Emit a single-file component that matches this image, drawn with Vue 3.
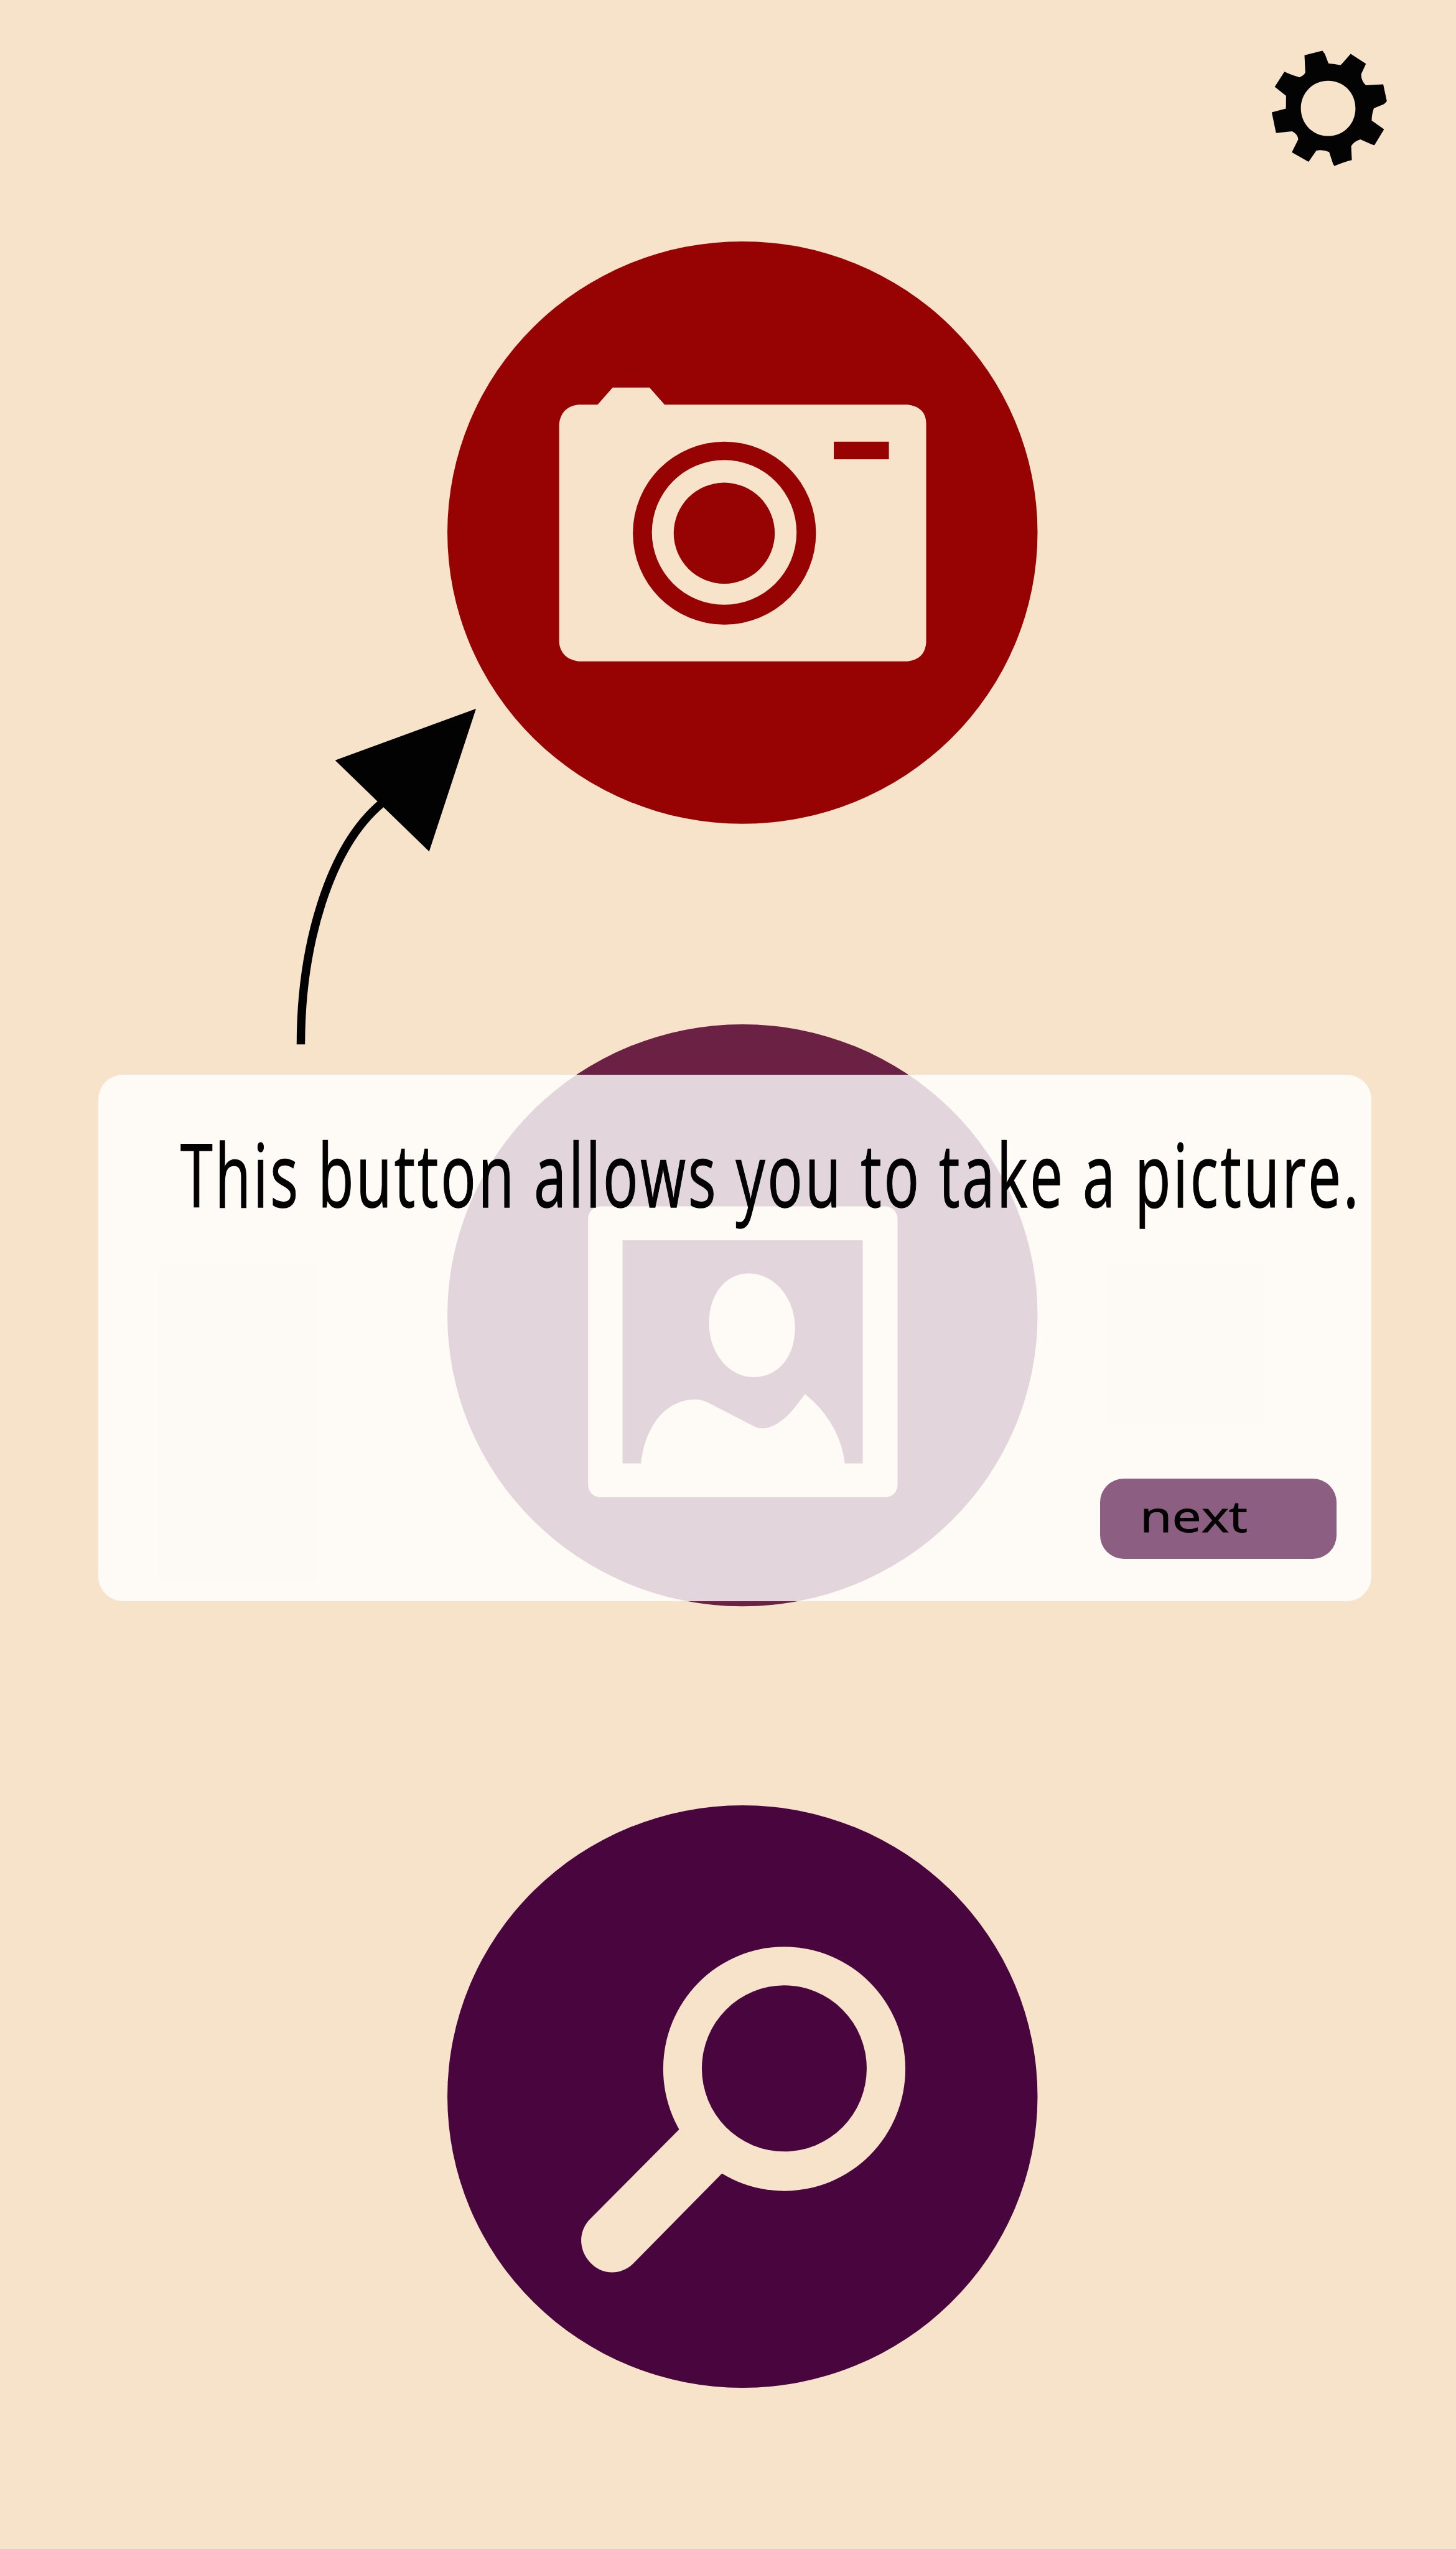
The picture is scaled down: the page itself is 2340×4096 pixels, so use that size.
<script setup>
const message = 'This button allows you to take a picture.'
</script>

<template>
  <main class="screen">
    <header class="top-bar">
      <button class="settings" aria-label="Settings">
        <svg viewBox="0 0 960 900">
          <path
            fill="#040303"
            fill-rule="evenodd"
            d="M316 128L425 100L440 120L462 178Q500 180 535 188L547 176L597 119L690 180L661 242Q660 285 690 310L795 305L817 408L800 425L738 450Q724 490 725 525L800 578L741 676L720 668L656 640Q620 650 600 680L604 765Q560 775 498 801L490 790L466 716Q425 700 388 708L341 776L239 718L278 640Q275 605 240 590L143 601L117 475L203 452L204 375L135 320L194 228Q240 250 285 262Q315 250 321 232ZM460 283C366 283 294 358 294 451S366 619 460 619S626 546 626 451S554 283 460 283Z"
          />
        </svg>
      </button>
    </header>

    <nav class="actions">
      <button class="action" aria-label="Camera">
        <svg viewBox="0 0 1568 1568" preserveAspectRatio="none">
          <ellipse cx="777.5" cy="783" rx="744.5" ry="746.5" fill="#970303" />
          <path
            fill="#f6e3ca"
            d="M363 455H412L450 411H543L581 455H1194Q1241 461 1241 504V1066Q1237 1108 1194 1113H363Q320 1106 315 1066V504Q320 461 363 455Z"
          />
          <ellipse cx="732" cy="784.5" rx="231" ry="234.5" fill="#970303" />
          <ellipse cx="731.5" cy="782.5" rx="182.5" ry="185.5" fill="#f6e3ca" />
          <ellipse cx="731.5" cy="784.5" rx="127.5" ry="129.5" fill="#970303" />
          <rect x="1008" y="550" width="139" height="45" fill="#970303" />
        </svg>
      </button>

      <button class="action" aria-label="Gallery">
        <svg viewBox="0 0 1568 1568" preserveAspectRatio="none">
          <ellipse cx="777.5" cy="779.5" rx="744.5" ry="746" fill="#6b2144" />
          <rect x="388" y="500" width="781" height="746" rx="32" fill="#f6e3ca" />
          <rect x="475" y="587" width="606" height="572" fill="#6b2144" />
          <path
            fill="#f6e3ca"
            d="M693 800C693 725 735 672 793 672C858 672 910 735 910 812C910 885 868 938 806 938C742 938 693 875 693 800Z"
          />
          <path
            fill="#f6e3ca"
            d="M521 1161C532 1055 590 995 658 995Q676 995 692 1004L805 1063Q826 1076 856 1062C890 1045 915 1010 935 981C990 1025 1029 1090 1036 1161Z"
          />
        </svg>
      </button>

      <button class="action" aria-label="Search">
        <svg viewBox="0 0 1568 1568" preserveAspectRatio="none">
          <ellipse cx="777.5" cy="772" rx="744.5" ry="746.5" fill="#48053e" />
          <path
            fill="#f6e3ca"
            d="M617 857L395 1084C363 1115 363 1163 392 1196C422 1230 468 1231 499 1203L727 968L800 900L700 800Z"
          />
          <ellipse cx="883" cy="701" rx="305.5" ry="313" fill="#f6e3ca" />
          <ellipse cx="883" cy="700" rx="208" ry="213" fill="#48053e" />
        </svg>
      </button>
    </nav>

    <svg class="pointer" viewBox="560 1400 480 760">
      <path d="M609.8 2117C609.8 1915 668 1715 775 1627" fill="none" stroke="#020202" stroke-width="17" />
      <path d="M965 1436.4L679.3 1541L870 1725.7Z" fill="#020202" />
    </svg>

    <section class="tip">
      <p class="message"><span>{{ message }}</span></p>
      <button class="next"><span>next</span></button>
    </section>
  </main>
</template>

<style>
body {
  margin: 0;
  background: #f6e3ca;
}
</style>

<style scoped>
.screen {
  --u: 0.79268px;
  position: relative;
  box-sizing: border-box;
  width: 2340px;
  height: 4096px;
  overflow: hidden;
  background: #f6e3ca;
  font-family: 'Open Sans', 'Noto Sans', sans-serif;
  color: #020202;
}

button {
  display: block;
  padding: 0;
  border: 0;
  background: none;
  font: inherit;
  color: inherit;
}

svg {
  display: block;
  width: 100%;
  height: 100%;
}

.top-bar {
  display: flex;
  justify-content: flex-end;
  padding: calc(70 * var(--u)) calc(92 * var(--u)) calc(90 * var(--u)) 0;
}

.settings {
  width: calc(320 * var(--u));
  height: calc(300 * var(--u));
}

.actions {
  display: flex;
  flex-direction: column;
  gap: calc(350 * var(--u));
  margin-left: calc(880 * var(--u));
}

.action {
  width: calc(1260 * var(--u));
  height: calc(1240 * var(--u));
}

.pointer {
  position: absolute;
  left: calc(560 * var(--u));
  top: calc(1400 * var(--u));
  width: calc(480 * var(--u));
  height: calc(760 * var(--u));
}

.tip {
  position: absolute;
  left: calc(199 * var(--u));
  top: calc(2179 * var(--u));
  box-sizing: border-box;
  display: flex;
  flex-direction: column;
  justify-content: space-between;
  width: calc(2581 * var(--u));
  height: calc(1067 * var(--u));
  padding: calc(80 * var(--u)) calc(70 * var(--u)) calc(86 * var(--u)) calc(167 * var(--u));
  border-radius: calc(50 * var(--u));
  background: rgba(255, 255, 255, 0.81);
}

.message {
  height: calc(240 * var(--u));
  margin: 0;
  font-size: calc(177 * var(--u));
  line-height: calc(240 * var(--u));
  white-space: nowrap;
}

.message span {
  display: inline-block;
  letter-spacing: 0.0398em;
  transform: scaleX(0.67);
  transform-origin: left;
  -webkit-text-stroke: 1.5px currentColor;
}

.next {
  align-self: flex-end;
  box-sizing: border-box;
  width: calc(480 * var(--u));
  height: calc(162 * var(--u));
  padding-left: calc(81 * var(--u));
  border-radius: calc(48 * var(--u));
  background: #8b5e82;
  font-size: calc(88.5 * var(--u));
  line-height: calc(149 * var(--u));
  text-align: left;
}

.next span {
  display: block;
  width: max-content;
  height: calc(162 * var(--u));
  transform: scaleX(1.2);
  transform-origin: left;
  -webkit-text-stroke: 1px currentColor;
}
</style>
